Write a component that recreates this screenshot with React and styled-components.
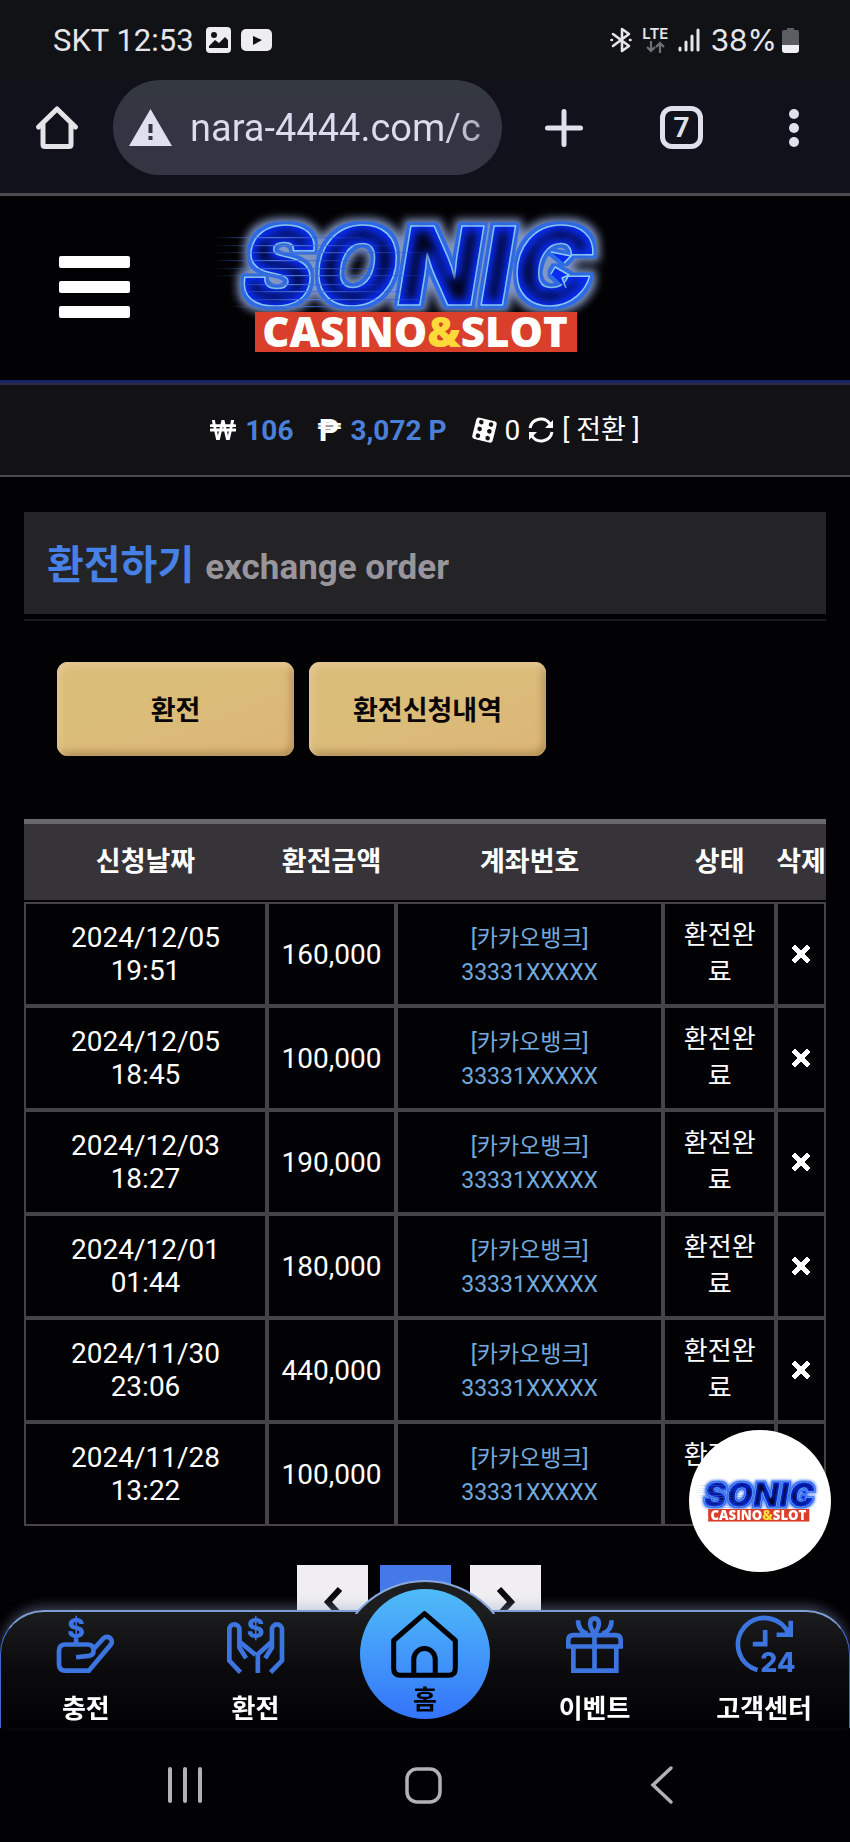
import React from "react";
import styled, { createGlobalStyle } from "styled-components";
import { FaWonSign } from "react-icons/fa";

const GlobalStyle = createGlobalStyle`
  *, *::before, *::after { box-sizing: border-box; }
  body {
    margin: 0;
    background: #020104;
    color: #fff;
    font-family: Roboto, "Noto Sans CJK KR", sans-serif;
  }
  button, input { font: inherit; color: inherit; }
  button { border: 0; padding: 0; background: none; cursor: pointer; }
  a { color: inherit; text-decoration: none; }
  svg { display: block; flex: none; overflow: visible; }
`;

const Page = styled.div`
  min-height: 100vh;
  padding-bottom: 205px;
`;

/* ---------- phone status bar and browser bar ---------- */

const StatusBar = styled.div`
  display: flex;
  justify-content: space-between;
  align-items: center;
  height: 80px;
  padding: 0 51px 0 53px;
  background: #111216;
  color: #e6e6ea;
  font-size: 31px;
`;

const StatusGroup = styled.div`
  display: flex;
  align-items: center;
  gap: ${(p) => p.$gap}px;
`;

const Battery = styled.span`
  font-family: Inter, Roboto, sans-serif;
  font-size: 30px;
`;

const Network = styled.span`
  display: flex;
  flex-direction: column;
  align-items: center;
  font-family: Inter, Roboto, sans-serif;
  font-size: 15px;
  line-height: 14px;
  font-weight: 600;
`;

const BrowserBar = styled.div`
  display: flex;
  align-items: center;
  height: 116px;
  padding: 0 37px 18px 36px;
  background: #10111a;
  border-bottom: 3px solid #4a4b4e;
`;

const AddressPill = styled.label`
  display: flex;
  align-items: center;
  gap: 18px;
  flex: 1;
  min-width: 0;
  height: 95px;
  margin: 0 43px 0 35px;
  padding: 0 18px 0 16px;
  border-radius: 48px;
  background: linear-gradient(#343940, #343542 45%);
`;

const AddressInput = styled.input`
  flex: 1;
  width: 100%;
  min-width: 0;
  padding: 0;
  border: 0;
  outline: 0;
  font-size: 38px;
  line-height: 48px;
  background: linear-gradient(90deg, #dcdcee 85%, #a5a5b4);
  background-clip: text;
  -webkit-text-fill-color: transparent;
`;

const BrowserActions = styled.div`
  display: flex;
  align-items: center;
  gap: 77px;
`;

const TabCount = styled.button`
  width: 43px;
  height: 43px;
  border: 5px solid #dfe0ec;
  border-radius: 12px;
  color: #dfe0ec;
  font-size: 28px;
  line-height: 32px;
  font-weight: 700;
`;

const DotsButton = styled.button`
  margin: 0 14px 0 86px;
`;

/* ---------- site header ---------- */

const SiteHeader = styled.header`
  display: flex;
  align-items: center;
  height: 189px;
  padding: 0 59px 6px;
  background: #020103;
  border-bottom: 2px solid #2b2a40;
  box-shadow: inset 0 -3px 0 #162266;
`;

const MenuButton = styled.button`
  display: grid;
  gap: 13px;
  width: 71px;
`;

const MenuLine = styled.span`
  height: 12px;
  border-radius: 2px;
  background: #fff;
`;

const LogoLink = styled.a`
  margin-left: 80px;
`;

const InfoBar = styled.div`
  display: flex;
  justify-content: center;
  align-items: center;
  height: 92px;
  background: #121114;
  border-bottom: 2px solid #4a494c;
  font-size: 28px;
  gap: 24px;
`;

const InfoItem = styled.span`
  display: flex;
  align-items: center;
  gap: ${(p) => p.$gap || 9}px;
`;

const Amount = styled.strong`
  color: #4a80d8;
  font-weight: 700;
`;

const Peso = styled.b`
  font-size: 32px;
  line-height: 32px;
`;

const Convert = styled.button`
  font-size: 27px;
  line-height: 36px;
`;

/* ---------- content ---------- */

const Content = styled.main`
  padding: 35px 24px 0;
`;

const TitleBar = styled.div`
  display: flex;
  align-items: baseline;
  gap: 11px;
  height: 102px;
  padding: 25px 23px 0;
  background: #242326;
`;

const Title = styled.h1`
  margin: 0;
  color: #4781e6;
  font-size: 40px;
  line-height: 58px;
  font-weight: 700;
`;

const Subtitle = styled.span`
  color: #98969b;
  font-size: 35px;
  font-weight: 700;
`;

const Rule = styled.hr`
  margin: 5px 0 0;
  border: 0;
  height: 2px;
  background: #1b1b1e;
`;

const Actions = styled.div`
  display: flex;
  gap: 15px;
  padding: 41px 33px 63px;
`;

const GoldButton = styled.button`
  width: 237px;
  height: 94px;
  padding-bottom: 2px;
  border-radius: 11px;
  background: linear-gradient(160deg, #dabd79 40%, #dcb677);
  box-shadow: inset 3px 4px 7px #e6c898, inset -3px -4px 7px #b08e55;
  color: #0a0608;
  font-size: 27px;
  font-weight: 700;
`;

const Table = styled.table`
  width: 100%;
  table-layout: fixed;
  border-collapse: separate;
  border-spacing: 0;
  text-align: center;
`;

const Th = styled.th`
  width: ${(p) => p.$w};
  height: 83px;
  padding: 0;
  background: #363439;
  background-clip: padding-box;
  border-top: 5px solid #6a686d;
  border-bottom: 2px solid #020104;
  font-size: 27px;
  line-height: 40px;
  font-weight: 700;
  white-space: nowrap;
`;

const Td = styled.td`
  height: 104px;
  padding: 0 ${(p) => p.$pad || 0}px;
  border: 2px solid #454348;
  font-size: 28px;
  line-height: 33px;
`;

const AccountTd = styled(Td)`
  padding-top: 4px;
`;

const Account = styled.span`
  display: block;
  color: #72a9de;
  font-size: 23px;
  line-height: 34px;
`;

const Status = styled.span`
  display: block;
  font-size: 26px;
  line-height: 37px;
  word-break: break-all;
`;

const DeleteButton = styled.button`
  display: block;
  margin: 0 auto;
`;

const Pager = styled.nav`
  display: flex;
  justify-content: center;
  gap: 12px;
  padding: 39px 12px 0 0;
`;

const PageButton = styled.button`
  display: grid;
  place-items: center;
  width: 71px;
  height: 72px;
  margin-right: ${(p) => (p.$active ? 7 : 0)}px;
  background: ${(p) => (p.$active ? "#4579e8" : "#f0eef1")};
`;

/* ---------- fixed overlays ---------- */

const FloatingLogo = styled.a`
  position: fixed;
  right: 19px;
  bottom: 270px;
  z-index: 2;
  display: grid;
  place-items: center;
  width: 142px;
  height: 142px;
  border-radius: 50%;
  background: #fff;
`;

const Footer = styled.footer`
  position: fixed;
  left: 0;
  right: 0;
  bottom: 0;
  z-index: 1;
  background: linear-gradient(transparent 60px, #020104 60px);
`;

const TabBar = styled.nav`
  position: relative;
  display: grid;
  grid-template-columns: repeat(5, 1fr);
  height: 118px;
  border-style: solid;
  border-width: 2px 1px 0;
  border-color: #7f9fd4 #4468c8;
  border-radius: 44px 44px 0 0;
  background: linear-gradient(#1b1c1e, #0b0b0d 50%, #020104);
  box-shadow: 0 -5px 12px -1px rgba(140, 165, 205, 0.4);
`;

const Dome = styled.div`
  position: absolute;
  left: 50%;
  top: -32px;
  width: 140px;
  height: 34px;
  margin-left: -70px;
  overflow: hidden;
  &::before {
    content: "";
    position: absolute;
    left: -20px;
    top: 0;
    width: 180px;
    height: 180px;
    border: 2px solid #87a8dc;
    border-radius: 50%;
    background: #1c1e20;
  }
`;

const Tab = styled.a`
  display: flex;
  flex-direction: column;
  align-items: center;
  padding-top: 4px;
  color: #3c74e0;
`;

const TabLabel = styled.span`
  margin-top: 17px;
  color: #fff;
  font-size: 26px;
  line-height: 38px;
  font-weight: 700;
  white-space: nowrap;
`;

const HomeTab = styled.a`
  position: relative;
  justify-self: center;
  display: flex;
  flex-direction: column;
  align-items: center;
  gap: 3px;
  width: 130px;
  height: 130px;
  margin-top: -23px;
  padding-top: 22px;
  border-radius: 50%;
  background: linear-gradient(#50bcf8, #3474fa);
  color: #020104;
  font-size: 26px;
  line-height: 38px;
  font-weight: 700;
`;

const SystemBar = styled.div`
  display: grid;
  grid-template-columns: repeat(3, 1fr);
  align-items: center;
  justify-items: center;
  height: 114px;
  padding: 0 69px 0 66px;
  color: #b2b1b5;
`;

/* ---------- drawings ---------- */

function SonicLogo({ width, light }) {
  const id = light ? "badge" : "head";
  const streaks = [0, 8, 15, 23, 31, 38, 47, 54, 62, 69];
  return (
    <svg width={width} viewBox="210 205 420 160" role="img" aria-label="SONIC CASINO&SLOT">
      <defs>
        <linearGradient id={`${id}-streak`}>
          <stop offset="0" stopColor="#3565c8" stopOpacity="0" />
          <stop offset="0.4" stopColor="#4d78d8" />
          <stop offset="1" stopColor="#1d46d8" stopOpacity="0.2" />
        </linearGradient>
        <filter id={`${id}-neon`} x="-10%" y="-30%" width="120%" height="160%" colorInterpolationFilters="sRGB">
          <feMorphology in="SourceAlpha" operator="dilate" radius="3" result="wide" />
          <feFlood floodColor="#2f6be4" />
          <feComposite in2="wide" operator="in" result="rim" />
          <feMorphology in="SourceAlpha" operator="dilate" radius="6" />
          <feGaussianBlur stdDeviation="4" result="halo" />
          <feFlood floodColor={light ? "#6f95ff" : "#8296c4"} />
          <feComposite in2="halo" operator="in" result="glow" />
          <feMorphology in="SourceAlpha" operator="erode" radius="6" />
          <feGaussianBlur stdDeviation="4" result="core" />
          <feFlood floodColor="#020420" />
          <feComposite in2="core" operator="in" result="shade" />
          <feMerge>
            <feMergeNode in="glow" />
            <feMergeNode in="rim" />
            <feMergeNode in="SourceGraphic" />
            <feMergeNode in="shade" />
          </feMerge>
        </filter>
      </defs>
      <g filter={`url(#${id}-neon)`} fill="#0a2cf0" stroke="#8fd0ff" strokeWidth="1.500" strokeLinejoin="round">
        <text
          x="242"
          y="303"
          fontFamily="Inter, sans-serif"
          fontWeight="900"
          fontStyle="italic"
          fontSize="108"
        >
          SONIC
        </text>
        <path d="M551 250l20 4-7 7M551 272l4-7 14 8-7 3 4 10" />
      </g>
      {streaks.map((y, i) => (
        <rect key={y} x={213 + (i > 5 ? 15 : 0)} y={235 + y} width={150 + (i % 3) * 30} height="1.200" fill={`url(#${id}-streak)`} />
      ))}
      <rect x="255" y="310" width="322" height="40" fill="#d93f2b" />
      <text
        x="415"
        y="345"
        textAnchor="middle"
        fontFamily="'Open Sans', sans-serif"
        fontWeight="800"
        fontSize="42"
        fill="#fff"
      >
        CASINO<tspan fill="#ffda3a">&amp;</tspan>SLOT
      </text>
    </svg>
  );
}

const PictureIcon = () => (
  <svg width="25" height="26" viewBox="0 0 25 26">
    <rect width="25" height="26" rx="4" fill="#eeeef2" />
    <circle cx="8" cy="8" r="3" fill="#111216" />
    <path d="M3 21v-2l6-6 4 3 6-6 3 3v8z" fill="#111216" />
  </svg>
);

const VideoIcon = () => (
  <svg width="31" height="22" viewBox="0 0 31 22">
    <rect width="31" height="22" rx="5" fill="#eeeef2" />
    <path d="M12 7l9 4-9 5z" fill="#111216" />
  </svg>
);

const BluetoothIcon = () => (
  <svg width="22" height="26" viewBox="0 0 22 26" fill="none" stroke="#e6e6ea" strokeWidth="2.6" strokeLinejoin="round" strokeLinecap="round">
    <path d="M3 7l16 12-7 5V2l7 5L3 19" />
    <path d="M1.500 13h.5M20 13h.5" />
  </svg>
);

const ArrowsIcon = () => (
  <svg width="19" height="12" viewBox="0 0 19 12" fill="none" stroke="#707176" strokeWidth="2.200">
    <path d="M5 0v10M1 6l4 4 4-4M14 12V2M10 6l4-4 4 4" />
  </svg>
);

const SignalIcon = () => (
  <svg width="22" height="24" viewBox="0 0 22 24" stroke="#e6e6ea" strokeWidth="3" strokeLinecap="round">
    <path d="M2 20v2M8 14v8M14 8v14M20 2v20" />
  </svg>
);

const BatteryIcon = () => (
  <svg width="17" height="25" viewBox="0 0 17 25">
    <path d="M5 0h7v2h3q2 0 2 2v14H0V4q0-2 2-2h3z" fill="#5c5d62" />
    <path d="M0 17h17v5q0 3-3 3H3q-3 0-3-3z" fill="#f0f0f3" />
  </svg>
);

const BrowserHomeIcon = () => (
  <svg width="42" height="43" viewBox="0 0 42 43" fill="none" stroke="#e4e4e8" strokeWidth="5" strokeLinejoin="round" strokeLinecap="round">
    <path d="M2.500 21L21 3l18.500 18M7 18v20.500q0 2 2 2h24q2 0 2-2V18" />
  </svg>
);

const WarningIcon = () => (
  <svg width="43" height="37" viewBox="0 0 43 37">
    <path d="M21.500 0L43 37H0z" fill="#dfe0ee" />
    <path d="M19.500 15h4v9h-4zM19.500 27h4v4h-4z" fill="#343542" />
  </svg>
);

const PlusIcon = () => (
  <svg width="38" height="38" viewBox="0 0 38 38" stroke="#dfe0ec" strokeWidth="5" strokeLinecap="round">
    <path d="M19 2.500v33M2.500 19h33" />
  </svg>
);

const DotsIcon = () => (
  <svg width="10" height="38" viewBox="0 0 10 38" fill="#dfe0ec">
    <circle cx="5" cy="5" r="5" />
    <circle cx="5" cy="19" r="5" />
    <circle cx="5" cy="33" r="5" />
  </svg>
);

const DiceIcon = () => (
  <svg width="26" height="26" viewBox="0 0 26 26">
    <g transform="rotate(14 13 13)">
      <rect x="3" y="2" width="21" height="22" rx="3" fill="#fff" />
      <g fill="#121114">
        {[6, 13, 20].map((y) => (
          <React.Fragment key={y}>
            <circle cx="8.500" cy={y} r="2.300" />
            <circle cx="18.500" cy={y} r="2.300" />
          </React.Fragment>
        ))}
      </g>
    </g>
  </svg>
);

const RefreshIcon = () => (
  <svg width="26" height="26" viewBox="0 0 26 26" fill="none" stroke="#fff" strokeWidth="3">
    <path d="M2 11A11 11 0 0 1 22 7M24 15A11 11 0 0 1 4 19" />
    <path d="M25 3v8h-8zM1 23v-8h8z" fill="#fff" stroke="none" />
  </svg>
);

const CrossIcon = () => (
  <svg width="20" height="20" viewBox="0 0 20 20" fill="#fff" stroke="#fff" strokeWidth="1" strokeLinejoin="round">
    <path d="M4 1l6 6 6-6 3 3-6 6 6 6-3 3-6-6-6 6-3-3 6-6-6-6z" />
  </svg>
);

const ChevronIcon = ({ right }) => (
  <svg width="20" height="26" viewBox="0 0 20 26" fill="none" stroke="#09080b" strokeWidth="6">
    <path d={right ? "M3 1l12 13L3 27" : "M17 1L5 14l12 13"} />
  </svg>
);

const tabSvg = {
  width: 57,
  height: 57,
  viewBox: "0 0 170 170",
  fill: "none",
  stroke: "currentColor",
  strokeWidth: 14,
};

const tabGlyph = {
  textAnchor: "middle",
  fontFamily: "Inter, sans-serif",
  fontWeight: 800,
  fontSize: 80,
  fill: "currentColor",
  stroke: "none",
};

const DepositIcon = () => (
  <svg {...tabSvg}>
    <text x="57" y="66" {...tabGlyph}>$</text>
    <path d="M57 66v20M57 123l38-4q14-2 14-16 0-18-18-18H25Q6 85 6 104v40q0 19 19 19h70l64-76a14 14 0 0 0-20-21l-31 34" />
  </svg>
);

const WithdrawIcon = () => (
  <svg {...tabSvg}>
    <text x="85" y="66" {...tabGlyph}>$</text>
    <path d="M40 168L7 133V40a15 15 0 0 1 30 0v54l20 32M37 76l48 40M130 168l34-35V40a15 15 0 0 0-30 0v54l-20 32M134 76l-42 38v56" />
  </svg>
);

const GiftIcon = () => (
  <svg {...tabSvg}>
    <path d="M7 91V72q0-15 15-15h126q15 0 15 15v19zM22 98v65h128V98M85 57v106M85 54C63 24 73 7 85 7s22 17 0 47M36 13q0 32 28 40M136 13q0 32-28 40" />
  </svg>
);

const SupportIcon = () => (
  <svg {...tabSvg}>
    <path d="M64 161A79 79 0 1 1 158 55M163 14v42h-42M87 42v42H50" />
    <text x="125" y="168" {...tabGlyph}>24</text>
  </svg>
);

const HomeIcon = () => (
  <svg width="67" height="67" viewBox="0 0 200 200" fill="none" stroke="currentColor" strokeWidth="15" strokeLinejoin="round">
    <path d="M100 8L8 88v84q0 20 20 20h144q20 0 20-20V88zM68 190v-46a32 32 0 0 1 64 0v46" />
  </svg>
);

const RecentsIcon = () => (
  <svg width="34" height="36" viewBox="0 0 34 36" stroke="currentColor" strokeWidth="4" strokeLinecap="round">
    <path d="M2 2v32M17 2v32M32 2v32" />
  </svg>
);

const SquareIcon = () => (
  <svg width="37" height="37" viewBox="0 0 37 37" fill="none" stroke="currentColor" strokeWidth="3.500">
    <rect x="2" y="2" width="33" height="33" rx="10" />
  </svg>
);

const BackIcon = () => (
  <svg width="22" height="38" viewBox="0 0 22 38" fill="none" stroke="currentColor" strokeWidth="3.500" strokeLinecap="round">
    <path d="M20 2L2 19l18 17" />
  </svg>
);

/* ---------- data ---------- */

const columns = [
  ["신청날짜", "30.3%"],
  ["환전금액", "16.1%"],
  ["계좌번호", "33.3%"],
  ["상태", "14.1%"],
  ["삭제", "6.2%"],
];

const orders = [
  ["2024/12/05", "19:51", "160,000"],
  ["2024/12/05", "18:45", "100,000"],
  ["2024/12/03", "18:27", "190,000"],
  ["2024/12/01", "01:44", "180,000"],
  ["2024/11/30", "23:06", "440,000"],
  ["2024/11/28", "13:22", "100,000"],
];

export default function App() {
  return (
    <Page>
      <GlobalStyle />
      <StatusBar>
        <StatusGroup $gap={12}>
          <span>SKT 12:53</span>
          <StatusGroup $gap={10}>
            <PictureIcon />
            <VideoIcon />
          </StatusGroup>
        </StatusGroup>
        <StatusGroup $gap={10}>
          <BluetoothIcon />
          <Network>
            LTE
            <ArrowsIcon />
          </Network>
          <SignalIcon />
          <StatusGroup $gap={5}>
            <Battery>38%</Battery>
            <BatteryIcon />
          </StatusGroup>
        </StatusGroup>
      </StatusBar>

      <BrowserBar>
        <button aria-label="Home"><BrowserHomeIcon /></button>
        <AddressPill>
          <WarningIcon />
          <AddressInput aria-label="Address" defaultValue="nara-4444.com/c" />
        </AddressPill>
        <BrowserActions>
          <button aria-label="New tab"><PlusIcon /></button>
          <TabCount>7</TabCount>
        </BrowserActions>
        <DotsButton aria-label="More"><DotsIcon /></DotsButton>
      </BrowserBar>

      <SiteHeader>
        <MenuButton aria-label="Menu">
          <MenuLine />
          <MenuLine />
          <MenuLine />
        </MenuButton>
        <LogoLink href="#home"><SonicLogo width={420} /></LogoLink>
      </SiteHeader>

      <InfoBar>
        <InfoItem>
          <FaWonSign size={26} />
          <Amount>106</Amount>
        </InfoItem>
        <InfoItem>
          <Peso>₱</Peso>
          <Amount>3,072 P</Amount>
        </InfoItem>
        <InfoItem $gap={8}>
          <DiceIcon />
          <span>0</span>
          <RefreshIcon />
          <Convert>[ 전환 ]</Convert>
        </InfoItem>
      </InfoBar>

      <Content>
        <TitleBar>
          <Title>환전하기</Title>
          <Subtitle>exchange order</Subtitle>
        </TitleBar>
        <Rule />
        <Actions>
          <GoldButton>환전</GoldButton>
          <GoldButton>환전신청내역</GoldButton>
        </Actions>

        <Table>
          <thead>
            <tr>
              {columns.map(([name, w]) => (
                <Th key={name} $w={w}>{name}</Th>
              ))}
            </tr>
          </thead>
          <tbody>
            {orders.map(([date, time, amount]) => (
              <tr key={date + time}>
                <Td $pad={40}>{date} {time}</Td>
                <Td>{amount}</Td>
                <AccountTd>
                  <Account>[카카오뱅크]</Account>
                  <Account>33331XXXXX</Account>
                </AccountTd>
                <Td $pad={16}><Status>환전완료</Status></Td>
                <Td>
                  <DeleteButton aria-label="삭제"><CrossIcon /></DeleteButton>
                </Td>
              </tr>
            ))}
          </tbody>
        </Table>

        <Pager>
          <PageButton aria-label="Previous"><ChevronIcon /></PageButton>
          <PageButton $active aria-label="Current page" />
          <PageButton aria-label="Next"><ChevronIcon right /></PageButton>
        </Pager>
      </Content>

      <FloatingLogo href="#chat"><SonicLogo width={132} light /></FloatingLogo>

      <Footer>
        <TabBar>
          <Dome />
          <Tab href="#deposit"><DepositIcon /><TabLabel>충전</TabLabel></Tab>
          <Tab href="#withdraw"><WithdrawIcon /><TabLabel>환전</TabLabel></Tab>
          <HomeTab href="#home"><HomeIcon />홈</HomeTab>
          <Tab href="#event"><GiftIcon /><TabLabel>이벤트</TabLabel></Tab>
          <Tab href="#support"><SupportIcon /><TabLabel>고객센터</TabLabel></Tab>
        </TabBar>
        <SystemBar>
          <button aria-label="Recents"><RecentsIcon /></button>
          <button aria-label="Home screen"><SquareIcon /></button>
          <button aria-label="Back"><BackIcon /></button>
        </SystemBar>
      </Footer>
    </Page>
  );
}
